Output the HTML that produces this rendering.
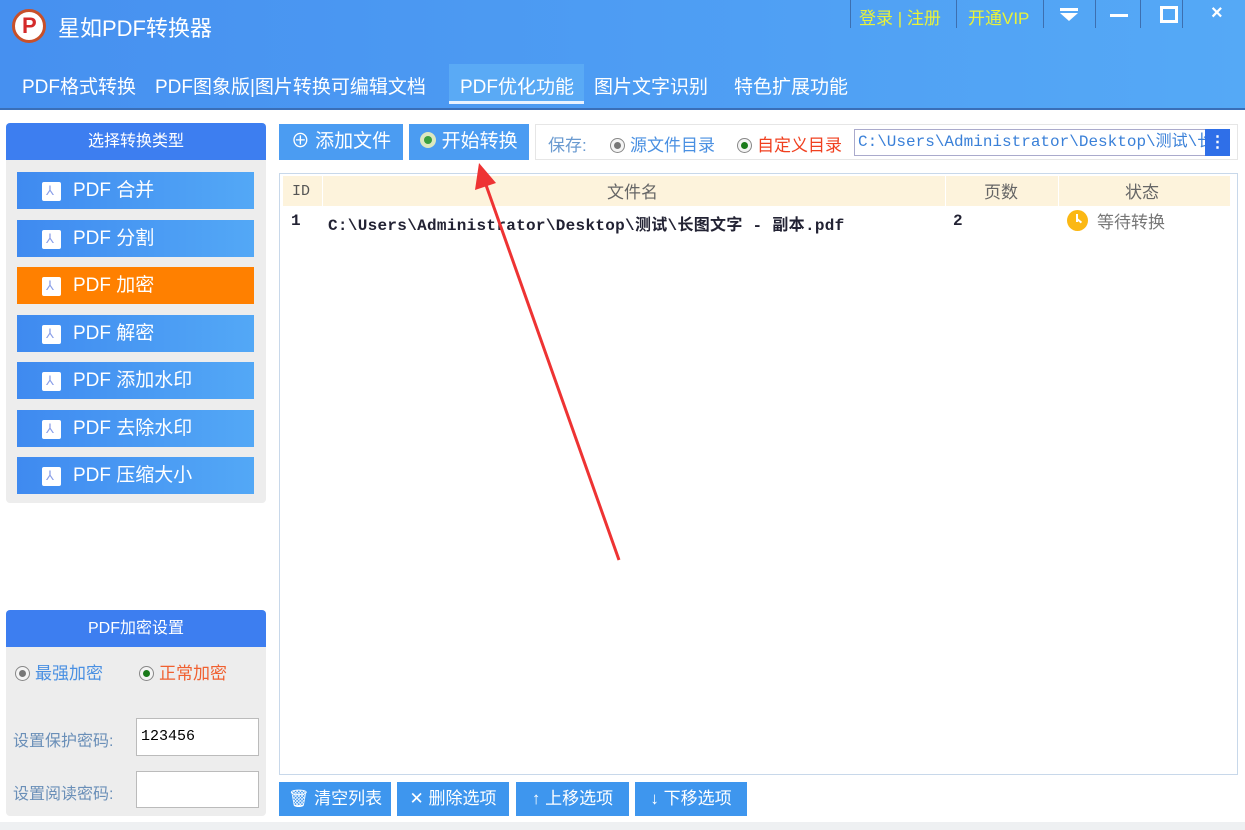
<!DOCTYPE html>
<html><head><meta charset="utf-8"><style>
*{margin:0;padding:0;box-sizing:border-box}
body{width:1245px;height:830px;overflow:hidden;background:#fff;font-family:"Liberation Sans","Noto Sans CJK SC",sans-serif;position:relative}
.a{position:absolute}
#top{left:0;top:0;width:1245px;height:110px;background:linear-gradient(90deg,#4690f0,#55a9f6);border-bottom:2px solid #3a6fb8}
.tab{top:72px;color:#fff;font-size:19px}
.item{position:absolute;left:17px;width:237px;height:37px;background:linear-gradient(90deg,#3f8af0,#53a8f6);color:#fff;font-size:19px;line-height:37px;padding-left:56px}
.item i{position:absolute;left:25px;top:10px;width:19px;height:19px;background:#fff;border-radius:2px}
.item i:after{content:"⅄";position:absolute;left:4px;top:-10px;font-size:13px;color:#8a9fe8;font-style:normal}
.btn{position:absolute;background:#4b9cf2;color:#fff;font-size:19px;text-align:center}
.bb{position:absolute;top:782px;height:34px;background:#3e96ee;color:#fff;font-size:17px;line-height:34px;text-align:center}
.rad{display:inline-block;width:15px;height:15px;border:1px solid #888;border-radius:50%;background:#f4f4f4;position:relative;vertical-align:-2px;margin-right:5px}
.rad:after{content:"";position:absolute;left:3px;top:3px;width:7px;height:7px;border-radius:50%;background:#777}
.rad.g:after{background:#1a7a1a}
.mono{font-family:"Liberation Mono","Noto Sans CJK SC",monospace}
</style></head><body>
<div id="top" class="a"></div>
<div class="a" style="left:12px;top:9px;width:34px;height:34px;border-radius:50%;background:#fff;border:3px solid #c8502a"><div style="position:absolute;left:7px;top:1px;font:bold 22px 'Liberation Sans';color:#d42a2a">P</div></div>
<div class="a" style="left:58px;top:11px;color:#fff;font-size:22px">星如PDF转换器</div>
<div class="a" style="left:850px;top:0;height:28px;border-left:1px solid #3d6fb0"></div>
<div class="a" style="left:859px;top:4px;color:#e8f23a;font-size:17px">登录 | 注册</div>
<div class="a" style="left:956px;top:0;height:28px;border-left:1px solid #3d6fb0"></div>
<div class="a" style="left:968px;top:4px;color:#e8f23a;font-size:17px">开通VIP</div>
<div class="a" style="left:1043px;top:0;height:28px;border-left:1px solid #3d6fb0"></div>
<div class="a" style="left:1060px;top:8px;width:18px;height:3px;background:#fff"></div>
<div class="a" style="left:1060px;top:13px;width:0;height:0;border-left:9px solid transparent;border-right:9px solid transparent;border-top:8px solid #fff"></div>
<div class="a" style="left:1095px;top:0;height:28px;border-left:1px solid #3d6fb0"></div>
<div class="a" style="left:1110px;top:14px;width:18px;height:3px;background:#fff"></div>
<div class="a" style="left:1140px;top:0;height:28px;border-left:1px solid #3d6fb0"></div>
<div class="a" style="left:1160px;top:6px;width:18px;height:17px;border:3px solid #fff"></div>
<div class="a" style="left:1182px;top:0;height:28px;border-left:1px solid #3d6fb0"></div>
<div class="a" style="left:1211px;top:2px;color:#fff;font-size:20px;font-weight:bold">×</div>
<div class="a tab" style="left:22px">PDF格式转换</div>
<div class="a tab" style="left:155px">PDF图象版|图片转换可编辑文档</div>
<div class="a" style="left:449px;top:64px;width:135px;height:40px;background:#5aaaf5;border-bottom:3px solid #e8f2ff"></div>
<div class="a tab" style="left:460px;top:72px">PDF优化功能</div>
<div class="a tab" style="left:594px">图片文字识别</div>
<div class="a tab" style="left:734px">特色扩展功能</div>

<div class="a" style="left:6px;top:123px;width:260px;height:380px;background:#ededed;border-radius:4px"></div>
<div class="a" style="left:6px;top:123px;width:260px;height:37px;background:#3d7ef0;border-radius:4px 4px 0 0;color:#fff;font-size:16px;text-align:center;line-height:37px">选择转换类型</div>
<div class="item" style="top:172px"><i></i>PDF 合并</div>
<div class="item" style="top:220px"><i></i>PDF 分割</div>
<div class="item" style="top:267px;background:#ff8000"><i></i>PDF 加密</div>
<div class="item" style="top:315px"><i></i>PDF 解密</div>
<div class="item" style="top:362px"><i></i>PDF 添加水印</div>
<div class="item" style="top:410px"><i></i>PDF 去除水印</div>
<div class="item" style="top:457px"><i></i>PDF 压缩大小</div>

<div class="a" style="left:6px;top:610px;width:260px;height:206px;background:#ededed;border-radius:4px"></div>
<div class="a" style="left:6px;top:610px;width:260px;height:37px;background:#3d7ef0;border-radius:4px 4px 0 0;color:#fff;font-size:16px;text-align:center;line-height:37px">PDF加密设置</div>
<div class="a" style="left:15px;top:659px;font-size:17px;color:#4a90e2"><span class="rad"></span>最强加密</div>
<div class="a" style="left:139px;top:659px;font-size:17px;color:#f06030"><span class="rad g"></span>正常加密</div>
<div class="a" style="left:13px;top:727px;font-size:16px;color:#6a8fb8">设置保护密码:</div>
<div class="a mono" style="left:136px;top:718px;width:123px;height:38px;background:#fff;border:1px solid #bbb;font-size:15px;line-height:36px;padding-left:4px">123456</div>
<div class="a" style="left:13px;top:780px;font-size:16px;color:#6a8fb8">设置阅读密码:</div>
<div class="a" style="left:136px;top:771px;width:123px;height:37px;background:#fff;border:1px solid #bbb"></div>

<div class="btn" style="left:279px;top:124px;width:124px;height:36px;line-height:36px">⊕ 添加文件</div>
<div class="btn" style="left:409px;top:124px;width:120px;height:36px;line-height:36px"><span style="display:inline-block;width:16px;height:16px;border-radius:50%;background:#dde8c0;position:relative;vertical-align:-1px"><span style="position:absolute;left:4px;top:4px;width:8px;height:8px;border-radius:50%;background:#3aa040"></span></span> 开始转换</div>
<div class="a" style="left:535px;top:124px;width:703px;height:36px;border:1px solid #e6e6e6"></div>
<div class="a" style="left:548px;top:131px;font-size:17px;color:#6a9ad0">保存:</div>
<div class="a" style="left:610px;top:131px;font-size:17px;color:#4a90e2"><span class="rad"></span>源文件目录</div>
<div class="a" style="left:737px;top:131px;font-size:17px;color:#f04020"><span class="rad g"></span>自定义目录</div>
<div class="a mono" style="left:854px;top:129px;width:352px;height:27px;border:1px solid #aac;font-size:16px;color:#3a80d8;line-height:25px;padding-left:3px;overflow:hidden;white-space:nowrap">C:\Users\Administrator\Desktop\测试\长</div>
<div class="a" style="left:1205px;top:129px;width:25px;height:27px;background:#2f6fe8;color:#fff;text-align:center;font-weight:bold;line-height:27px">⋮</div>

<div class="a" style="left:279px;top:173px;width:959px;height:602px;border:1px solid #c8d8ea"></div>
<div class="a" style="left:283px;top:176px;width:947px;height:30px;background:#fdf3dc"></div>
<div class="a" style="left:322px;top:176px;width:1px;height:30px;background:#fff"></div>
<div class="a" style="left:945px;top:176px;width:1px;height:30px;background:#fff"></div>
<div class="a" style="left:1058px;top:176px;width:1px;height:30px;background:#fff"></div>
<div class="a mono" style="left:292px;top:183px;font-size:15px;color:#555">ID</div>
<div class="a" style="left:607px;top:178px;font-size:17px;color:#666">文件名</div>
<div class="a" style="left:984px;top:178px;font-size:17px;color:#666">页数</div>
<div class="a" style="left:1125px;top:178px;font-size:17px;color:#666">状态</div>
<div class="a mono" style="left:291px;top:212px;font-size:16px;color:#223;font-weight:bold">1</div>
<div class="a mono" style="left:328px;top:211px;font-size:16px;color:#223;font-weight:bold;letter-spacing:0.3px">C:\Users\Administrator\Desktop\测试\长图文字 - 副本.pdf</div>
<div class="a mono" style="left:953px;top:212px;font-size:16px;color:#223;font-weight:bold">2</div>
<div class="a" style="left:1067px;top:210px;width:21px;height:21px;border-radius:50%;background:#fbb814"></div>
<div class="a" style="left:1076px;top:214px;width:2px;height:8px;background:#fff"></div>
<div class="a" style="left:1077px;top:220px;width:5px;height:2px;background:#fff;transform:rotate(40deg)"></div>
<div class="a" style="left:1097px;top:208px;font-size:17px;color:#777">等待转换</div>

<div class="bb" style="left:279px;width:112px">🗑 清空列表</div>
<div class="bb" style="left:397px;width:112px">✕ 删除选项</div>
<div class="bb" style="left:516px;width:113px">↑ 上移选项</div>
<div class="bb" style="left:635px;width:112px">↓ 下移选项</div>
<div class="a" style="left:0;top:822px;width:1245px;height:8px;background:#eef0f2"></div>

<svg class="a" style="left:0;top:0" width="1245" height="830"><line x1="619" y1="560" x2="486" y2="185" stroke="#ee3333" stroke-width="3"/><polygon points="479,163 475,190 496,183" fill="#ee3333"/></svg>
</body></html>
